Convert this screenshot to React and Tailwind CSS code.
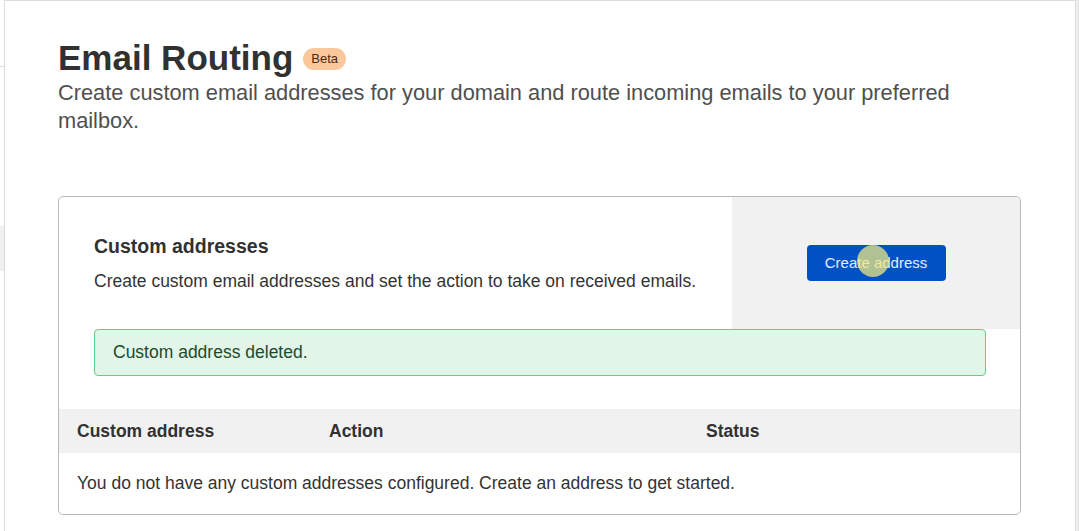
import React from 'react';

const font = { fontFamily: '"Liberation Sans", Arial, sans-serif' };

const SideStrip = () => (
  <div className="w-[4px] shrink-0 flex flex-col">
    <div className="h-[66px]" />
    <div className="h-px bg-[#dcdcdc]" />
    <div className="h-[159px]" />
    <div className="h-[45px] bg-[#f0f0f0]" />
  </div>
);

const CreateButton = () => (
  <div className="relative">
    <button className="h-[36px] w-[139px] rounded-[4px] bg-[#0051c3] text-[15px] text-white/90">
      Create address
    </button>
    {/* click highlight left by the recorder */}
    <div className="pointer-events-none absolute left-[50px] top-0 h-8 w-8 rounded-full bg-[rgba(240,232,130,0.74)]" />
  </div>
);

export default function App() {
  return (
    <div className="flex min-h-[531px] bg-white text-[#333]" style={font}>
      <SideStrip />
      <main className="flex-1 border-x border-t border-[#dcdcdc] pt-9 pl-[53px] pr-[54px]">
        <div className="flex items-center gap-[10px]">
          <h1 className="text-[35px] leading-[42px] font-bold text-[#313131]">Email Routing</h1>
          <span className="mt-[2px] h-[22px] rounded-full bg-[#fbc89b] px-[8px] text-[13px] leading-[22px] text-[#4a2a12]">
            Beta
          </span>
        </div>
        <p className="text-[21.8px] leading-[28px] text-[#4f4f4f]">
          Create custom email addresses for your domain and route incoming emails to your preferred mailbox.
        </p>

        <section className="mt-[61px] w-[963px] rounded-[5px] border border-[#b9b9b9]">
          <div className="flex">
            <div className="flex-1 px-[35px] pt-[35px] pb-[36px]">
              <h2 className="text-[19.5px] leading-[28px] font-bold text-[#313131]">Custom addresses</h2>
              <p className="mt-[9px] whitespace-nowrap text-[17.5px] leading-[24px] text-[#333]">
                Create custom email addresses and set the action to take on received emails.
              </p>
            </div>
            <div className="flex w-[288px] items-center justify-center rounded-tr-[4px] bg-[#f1f1f1]">
              <CreateButton />
            </div>
          </div>

          <div className="ml-[35px] flex h-[47px] w-[892px] items-center rounded-[4px] border border-[#62cf85] bg-[#e1f5e9] px-[18px] text-[17.5px] text-[#1e4a2c]">
            Custom address deleted.
          </div>

          <div className="mt-[33px] grid h-[44px] grid-cols-[252px_377px_1fr] items-center bg-[#f1f1f1] text-[17.5px] font-bold text-[#313131]">
            <div className="px-[18px]">Custom address</div>
            <div className="px-[18px]">Action</div>
            <div className="px-[18px]">Status</div>
          </div>
          <div className="flex h-[61px] items-center px-[18px] text-[17.5px] text-[#333]">
            You do not have any custom addresses configured. Create an address to get started.
          </div>
        </section>
      </main>
      <div className="w-[3px] shrink-0 border-r border-[#e0e0e0] bg-[#f0f0f0]" />
    </div>
  );
}
